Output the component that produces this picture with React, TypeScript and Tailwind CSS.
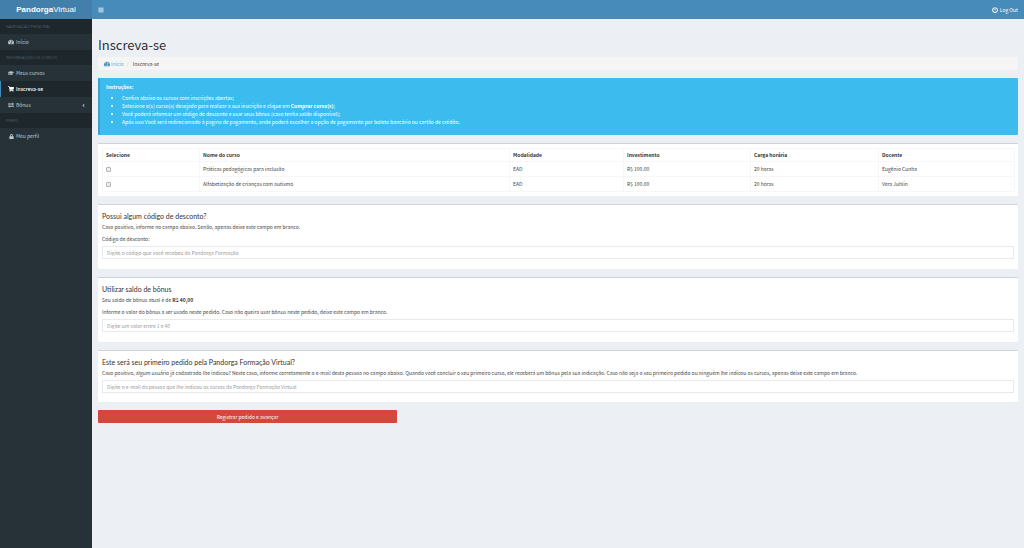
import type { ReactNode } from "react";
import clsx from "clsx";
import {
  FaAngleLeft,
  FaBars,
  FaGraduationCap,
  FaLock,
  FaPowerOff,
  FaShoppingCart,
  FaTachometerAlt,
} from "react-icons/fa";

interface Course {
  id: string;
  name: string;
  mode: string;
  price: string;
  hours: string;
  teacher: string;
}

const courses: Course[] = [
  {
    id: "praticas",
    name: "Práticas pedagógicas para inclusão",
    mode: "EAD",
    price: "R$ 100.00",
    hours: "20 horas",
    teacher: "Eugênio Cunha",
  },
  {
    id: "alfabetizacao",
    name: "Alfabetização de crianças com autismo",
    mode: "EAD",
    price: "R$ 100.00",
    hours: "20 horas",
    teacher: "Vera Juhlin",
  },
];

const ExchangeIcon = () => (
  <svg viewBox="0 0 14 14" className="h-[6px] w-[6px]" fill="currentColor" aria-hidden="true">
    <path d="M0 3.500h10.400V1.300L14 4.700l-3.600 3.400V6H0zM14 8.500H3.600V6.300L0 9.700l3.600 3.400V11H14z" />
  </svg>
);

const NavHeader = ({ children }: { children: ReactNode }) => (
  <h2 className="flex h-[15px] items-center bg-[#1e272b] px-[6px] font-['Noto_Sans',sans-serif] text-[4px] text-[#4b5a61]">
    {children}
  </h2>
);

interface NavItemProps {
  icon: ReactNode;
  label: string;
  active?: boolean;
  expandable?: boolean;
}

const NavItem = ({ icon, label, active = false, expandable = false }: NavItemProps) => (
  <a
    href="#"
    aria-current={active ? "page" : undefined}
    className={clsx(
      "flex h-4 items-center gap-[2px] border-l pl-[7px] pr-[6px]",
      active ? "border-[#3c8dbc] bg-[#1e282c] font-medium text-white" : "border-transparent text-[#b8c7ce]"
    )}
  >
    <span className="flex w-[6px] justify-center text-[6px]">{icon}</span>
    <span>{label}</span>
    {expandable ? <FaAngleLeft className="ml-auto text-[5px]" /> : null}
  </a>
);

const Box = ({ children, className }: { children: ReactNode; className?: string }) => (
  <section className={clsx("mb-2 rounded-[1px] border-t border-[#cdd2db] bg-white px-1", className)}>
    {children}
  </section>
);

const BoxTitle = ({ children }: { children: ReactNode }) => (
  <h2 className="pt-[7px] font-['Lato',sans-serif] text-[7px] leading-[9px] text-[#333]">{children}</h2>
);

const inputClass =
  "block h-[13px] w-full border border-[#e9eaee] bg-white px-[4px] text-[5px] text-[#555] outline-none placeholder:text-[#999]";

const cellClass = "border border-[#f7f7f7] px-[3px] text-left";

export default function App() {
  return (
    <div className="flex min-h-screen flex-col bg-[#ecf0f5] font-['Noto_Sans_CJK_SC','Open_Sans',sans-serif] text-[5px] leading-[8px] text-[#444]">
      <header className="flex h-[19px] text-white">
        <a
          href="#"
          className="flex w-[92px] items-center justify-center bg-[#4280ab] font-['Liberation_Sans',Arial,sans-serif] text-[8px]"
        >
          <b>Pandorga</b>Virtual
        </a>
        <nav className="flex flex-1 items-center justify-between bg-[#478bba] px-[6px]">
          <button type="button" aria-label="Alternar menu">
            <FaBars className="text-[6px]" />
          </button>
          <a href="#" className="flex items-center gap-[2px]">
            <FaPowerOff className="text-[6px]" />
            Log Out
          </a>
        </nav>
      </header>

      <div className="flex flex-1">
        <aside className="w-[92px] shrink-0 bg-[#263238]">
          <NavHeader>NAVEGAÇÃO PRINCIPAL</NavHeader>
          <NavItem icon={<FaTachometerAlt />} label="Início" />
          <NavHeader>INFORMAÇÕES DE CURSOS</NavHeader>
          <NavItem icon={<FaGraduationCap />} label="Meus cursos" />
          <NavItem icon={<FaShoppingCart />} label="Inscreva-se" active />
          <NavItem icon={<ExchangeIcon />} label="Bônus" expandable />
          <NavHeader>PERFIL</NavHeader>
          <NavItem icon={<FaLock className="text-[5px]" />} label="Meu perfil" />
        </aside>

        <main className="min-w-0 flex-1 px-[6px] pt-[18px]">
          <h1 className="text-[13px] leading-4 text-[#333]">Inscreva-se</h1>
          <nav
            aria-label="Trilha"
            className="mt-1 mb-2 flex h-[13px] items-center rounded-[1px] bg-[#f5f5f5] px-[6px]"
          >
            <a href="#" className="flex items-center gap-px text-[#72afd2]">
              <FaTachometerAlt className="text-[6px] text-[#3c8dbc]" />
              Início
            </a>
            <span className="pr-[4px] pl-[3px] text-[#ccc]">/</span>
            <span>Inscreva-se</span>
          </nav>

          <section className="mb-2 rounded-[1px] border-l-2 border-[#3a9fc9] bg-[#3cbcee] px-[6px] pt-[5px] pb-[9px] text-white">
            <h2 className="mb-[3px] font-bold">Instruções:</h2>
            <ul className="list-disc pl-4">
              <li>Confira abaixo os cursos com inscrições abertas;</li>
              <li>
                Selecione o(s) curso(s) desejado para realizar a sua inscrição e clique em <b>Comprar curso(s)</b>;
              </li>
              <li>Você poderá informar um código de desconto e usar seus bônus (caso tenha saldo disponível);</li>
              <li>
                Após isso Você será redirecionado à pagina de pagamento, onde poderá escolher a opção de pagamento por
                boleto bancário ou cartão de crédito.
              </li>
            </ul>
          </section>

          <form onSubmit={(event) => event.preventDefault()}>
            <Box className="pt-1 pb-1">
              <table className="w-full table-fixed border-collapse">
                <colgroup>
                  <col className="w-[97px]" />
                  <col className="w-[310px]" />
                  <col className="w-[114px]" />
                  <col className="w-[127px]" />
                  <col className="w-[128px]" />
                  <col className="w-[136px]" />
                </colgroup>
                <thead>
                  <tr className="h-[13px] text-[#333]">
                    <th className={cellClass}>Selecione</th>
                    <th className={cellClass}>Nome do curso</th>
                    <th className={cellClass}>Modalidade</th>
                    <th className={cellClass}>Investimento</th>
                    <th className={cellClass}>Carga horária</th>
                    <th className={cellClass}>Docente</th>
                  </tr>
                </thead>
                <tbody>
                  {courses.map((course) => (
                    <tr key={course.id} className="h-[15px]">
                      <td className={cellClass}>
                        <input
                          type="checkbox"
                          id={course.id}
                          className="block h-[5px] w-[5px] appearance-none rounded-[1px] border border-[#b5b5b5] bg-[#eee] checked:bg-[#3c8dbc]"
                        />
                      </td>
                      <td className={cellClass}>
                        <label htmlFor={course.id}>{course.name}</label>
                      </td>
                      <td className={cellClass}>{course.mode}</td>
                      <td className={cellClass}>{course.price}</td>
                      <td className={cellClass}>{course.hours}</td>
                      <td className={cellClass}>{course.teacher}</td>
                    </tr>
                  ))}
                </tbody>
              </table>
            </Box>

            <Box className="pb-[10px]">
              <BoxTitle>Possui algum código de desconto?</BoxTitle>
              <p className="mt-[2px]">Caso positivo, informe no campo abaixo. Senão, apenas deixe este campo em branco.</p>
              <label htmlFor="discount" className="mt-1 mb-[3px] block">
                Código de desconto:
              </label>
              <input
                id="discount"
                type="text"
                className={inputClass}
                placeholder="Digite o código que você recebeu da Pandorga Formação"
              />
            </Box>

            <Box className="pb-[10px]">
              <BoxTitle>Utilizar saldo de bônus</BoxTitle>
              <p className="mt-[2px]">
                Seu saldo de bônus atual é de <b className="text-[#333]">R$ 40,00</b>
              </p>
              <label htmlFor="bonus" className="mt-1 mb-[3px] block">
                Informe o valor do bônus a ser usado neste pedido. Caso não queira usar bônus neste pedido, deixe este
                campo em branco.
              </label>
              <input id="bonus" type="text" className={inputClass} placeholder="Digite um valor entre 1 e 40" />
            </Box>

            <Box className="pb-[9px]">
              <BoxTitle>Este será seu primeiro pedido pela Pandorga Formação Virtual?</BoxTitle>
              <label htmlFor="referral" className="mt-[2px] mb-[3px] block">
                Caso positivo, algum usuário já cadastrado lhe indicou? Neste caso, informe corretamente o e-mail desta
                pessoa no campo abaixo. Quando você concluir o seu primeiro curso, ele receberá um bônus pela sua
                indicação. Caso não seja o seu primeiro pedido ou ninguém lhe indicou os cursos, apenas deixe este campo
                em branco.
              </label>
              <input
                id="referral"
                type="email"
                className={inputClass}
                placeholder="Digite o e-mail da pessoa que lhe indicou os cursos da Pandorga Formação Virtual"
              />
            </Box>

            <button
              type="submit"
              className="block h-[13px] w-[299px] max-w-full rounded-[1px] bg-[#d4473a] text-center text-white"
            >
              Registrar pedido e avançar
            </button>
          </form>
        </main>
      </div>
    </div>
  );
}
